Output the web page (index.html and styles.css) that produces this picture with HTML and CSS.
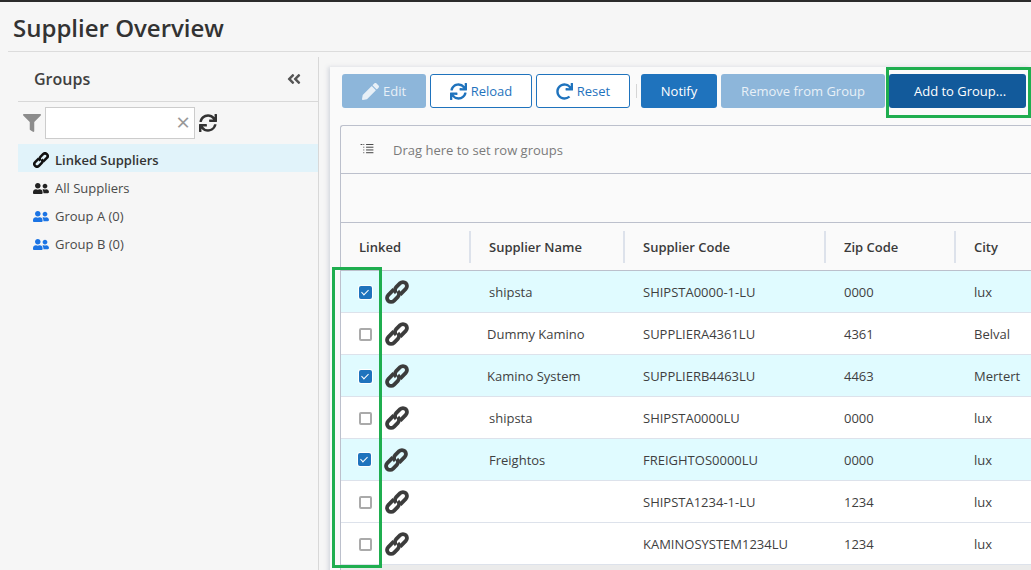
FILE: index.html
```html
<!DOCTYPE html>
<html lang="en">
<head>
    <meta charset="UTF-8">
    <meta name="viewport" content="width=device-width, initial-scale=1.0">
    <title>Supplier Overview</title>
    <link rel="stylesheet" href="styles.css">
</head>
<body>
    <svg class="sprites" aria-hidden="true">
        <symbol id="i-link" viewBox="-15 -15 30 30"><g transform="rotate(-45)" fill="none" stroke="currentColor" stroke-width="4.8"><path d="M-.5-5H-10.5A5 5 0 0 0-10.5 5H-3.5A5 5 0 0 0 1.5 0"/><path d="M.5 5H10.5A5 5 0 0 0 10.5-5H3.5A5 5 0 0 0-1.5 0"/></g></symbol>
        <symbol id="i-sync" viewBox="0 0 512 512"><path d="M440.65 12.57l4 82.77A247.16 247.16 0 0 0 255.83 8C134.73 8 33.91 94.92 12.29 209.82A12 12 0 0 0 24.09 224h49.05a12 12 0 0 0 11.67-9.26 175.91 175.91 0 0 1 317-56.94l-101.46-4.86a12 12 0 0 0-12.57 12v47.41a12 12 0 0 0 12 12H500a12 12 0 0 0 12-12V12a12 12 0 0 0-12-12h-47.37a12 12 0 0 0-11.98 12.57zM255.83 432a175.61 175.61 0 0 1-146-77.8l101.8 4.87a12 12 0 0 0 12.57-12v-47.4a12 12 0 0 0-12-12H12a12 12 0 0 0-12 12V500a12 12 0 0 0 12 12h47.35a12 12 0 0 0 12-12.6l-4.15-82.57A247.17 247.17 0 0 0 255.83 504c121.11 0 221.93-86.92 243.55-201.82a12 12 0 0 0-11.8-14.18h-49.05a12 12 0 0 0-11.67 9.26A175.86 175.86 0 0 1 255.83 432z"/></symbol>
        <symbol id="i-redo" viewBox="0 0 512 512"><path d="M500.33 0h-47.41a12 12 0 0 0-12 12.57l4 82.76A247.42 247.42 0 0 0 256 8C119.34 8 7.9 119.53 8 256.19 8.1 393.07 119.1 504 256 504a247.1 247.1 0 0 0 166.18-63.91 12 12 0 0 0 .48-17.43l-34-34a12 12 0 0 0-16.38-.55A176 176 0 1 1 402.1 157.8l-101.53-4.87a12 12 0 0 0-12.57 12v47.41a12 12 0 0 0 12 12h200.33a12 12 0 0 0 12-12V12a12 12 0 0 0-12-12z"/></symbol>
        <symbol id="i-pencil" viewBox="0 0 512 512"><path d="M497.9 142.1l-46.1 46.1c-4.7 4.7-12.3 4.7-17 0l-111-111c-4.7-4.7-4.7-12.3 0-17l46.1-46.1c18.7-18.7 49.1-18.7 67.9 0l60.1 60.1c18.8 18.7 18.8 49.1 0 67.9zM284.2 99.8L21.6 362.4.4 483.9c-2.9 16.4 11.4 30.6 27.8 27.8l121.5-21.3 262.6-262.6c4.7-4.7 4.7-12.3 0-17l-111-111c-4.8-4.7-12.4-4.7-17.1 0z"/></symbol>
        <symbol id="i-filter" viewBox="0 0 512 512"><path d="M487.976 0H24.028C2.71 0-8.047 25.866 7.058 40.971L192 225.941V432c0 7.831 3.821 15.17 10.237 19.662l80 55.98C298.02 518.69 320 507.493 320 487.98V225.941l184.947-184.97C520.021 25.896 509.338 0 487.976 0z"/></symbol>
        <symbol id="i-users" viewBox="0 0 640 512"><path d="M192 256c61.9 0 112-50.1 112-112S253.9 32 192 32 80 82.1 80 144s50.1 112 112 112zm76.8 32h-8.3c-20.8 10-43.9 16-68.5 16s-47.6-6-68.5-16h-8.3C51.6 288 0 339.6 0 403.2V432c0 26.5 21.5 48 48 48h288c26.5 0 48-21.5 48-48v-28.8c0-63.6-51.6-115.2-115.2-115.2zM480 256c53 0 96-43 96-96s-43-96-96-96-96 43-96 96 43 96 96 96zm48 32h-3.8c-13.9 4.8-28.6 8-44.2 8s-30.3-3.2-44.2-8H432c-20.4 0-39.2 5.9-55.7 15.4 24.4 26.3 39.7 61.2 39.7 99.8v38.4c0 2.2-.5 4.3-.6 6.4H592c26.5 0 48-21.5 48-48 0-61.9-50.1-112-112-112z"/></symbol>
        <symbol id="i-collapse" viewBox="0 0 448 512"><path d="M223.7 239l136-136c9.4-9.4 24.6-9.4 33.9 0l22.6 22.6c9.4 9.4 9.4 24.6 0 33.9L319.9 256l96.4 96.4c9.4 9.4 9.4 24.6 0 33.9L393.7 409c-9.4 9.4-24.6 9.4-33.9 0l-136-136c-9.5-9.4-9.5-24.6-.1-34zm-192 34l136 136c9.4 9.4 24.6 9.4 33.9 0l22.6-22.6c9.4-9.4 9.4-24.6 0-33.9L127.9 256l96.4-96.4c9.4-9.4 9.4-24.6 0-33.9L201.7 103c-9.4-9.4-24.6-9.4-33.9 0l-136 136c-9.5 9.4-9.5 24.6-.1 34z"/></symbol>
    </svg>

    <div class="topbar"></div>
    <h1 class="page-title">Supplier Overview</h1>

    <div class="layout">
        <aside class="sidebar">
            <div class="sidebar-head">
                <span class="sidebar-title">Groups</span>
                <svg class="icon-collapse"><use href="#i-collapse"/></svg>
            </div>
            <div class="filter-row">
                <svg class="icon-filter"><use href="#i-filter"/></svg>
                <div class="filter-box"><span class="filter-clear">×</span></div>
                <svg class="icon-refresh"><use href="#i-sync"/></svg>
            </div>
            <ul class="group-list">
                <li class="group-item selected"><svg class="icon-chain"><use href="#i-link"/></svg>Linked Suppliers</li>
                <li class="group-item"><svg class="icon-people"><use href="#i-users"/></svg>All Suppliers</li>
                <li class="group-item"><svg class="icon-people blue"><use href="#i-users"/></svg>Group A (0)</li>
                <li class="group-item"><svg class="icon-people blue"><use href="#i-users"/></svg>Group B (0)</li>
            </ul>
        </aside>

        <main class="panel">
            <div class="toolbar">
                <button class="btn btn-solid off btn-edit"><svg><use href="#i-pencil"/></svg>Edit</button>
                <button class="btn btn-line btn-reload"><svg><use href="#i-sync"/></svg>Reload</button>
                <button class="btn btn-line btn-reset"><svg><use href="#i-redo"/></svg>Reset</button>
                <span class="toolbar-sep"></span>
                <button class="btn btn-solid btn-notify">Notify</button>
                <button class="btn btn-solid off btn-remove">Remove from Group</button>
                <button class="btn btn-solid btn-add">Add to Group...</button>
            </div>

            <div class="grid">
                <div class="grid-groups">
                    <svg class="icon-rowgroup" viewBox="0 0 14 12"><path d="M0 .5h2M3 .5h1M3 3.5h1M3 6.5h1M3 9.5h1M6 .5h8M6 3.5h8M6 6.5h8M6 9.5h8"/></svg>
                    <span>Drag here to set row groups</span>
                </div>
                <div class="grid-filter"></div>
                <div class="row head">
                    <div class="cell">Linked</div>
                    <div class="cell">Supplier Name</div>
                    <div class="cell">Supplier Code</div>
                    <div class="cell">Zip Code</div>
                    <div class="cell">City</div>
                </div>
                <div class="row on">
                    <div class="cell cell-link"><span class="check on"></span><svg class="icon-link"><use href="#i-link"/></svg></div>
                    <div class="cell">shipsta</div>
                    <div class="cell">SHIPSTA0000-1-LU</div>
                    <div class="cell">0000</div>
                    <div class="cell">lux</div>
                </div>
                <div class="row">
                    <div class="cell cell-link"><span class="check"></span><svg class="icon-link"><use href="#i-link"/></svg></div>
                    <div class="cell shift">Dummy Kamino</div>
                    <div class="cell">SUPPLIERA4361LU</div>
                    <div class="cell">4361</div>
                    <div class="cell">Belval</div>
                </div>
                <div class="row on">
                    <div class="cell cell-link"><span class="check on"></span><svg class="icon-link"><use href="#i-link"/></svg></div>
                    <div class="cell shift">Kamino System</div>
                    <div class="cell">SUPPLIERB4463LU</div>
                    <div class="cell">4463</div>
                    <div class="cell">Mertert</div>
                </div>
                <div class="row">
                    <div class="cell cell-link"><span class="check"></span><svg class="icon-link"><use href="#i-link"/></svg></div>
                    <div class="cell">shipsta</div>
                    <div class="cell">SHIPSTA0000LU</div>
                    <div class="cell">0000</div>
                    <div class="cell">lux</div>
                </div>
                <div class="row on">
                    <div class="cell cell-link shift"><span class="check on"></span><svg class="icon-link"><use href="#i-link"/></svg></div>
                    <div class="cell">Freightos</div>
                    <div class="cell">FREIGHTOS0000LU</div>
                    <div class="cell">0000</div>
                    <div class="cell">lux</div>
                </div>
                <div class="row">
                    <div class="cell cell-link"><span class="check"></span><svg class="icon-link"><use href="#i-link"/></svg></div>
                    <div class="cell"></div>
                    <div class="cell">SHIPSTA1234-1-LU</div>
                    <div class="cell">1234</div>
                    <div class="cell">lux</div>
                </div>
                <div class="row">
                    <div class="cell cell-link"><span class="check"></span><svg class="icon-link"><use href="#i-link"/></svg></div>
                    <div class="cell"></div>
                    <div class="cell">KAMINOSYSTEM1234LU</div>
                    <div class="cell">1234</div>
                    <div class="cell">lux</div>
                </div>
                <div class="grid-foot"></div>
            </div>
        </main>
    </div>

    <!-- green annotation boxes drawn over the screenshot -->
    <div class="mark mark-add"></div>
    <div class="mark mark-check"></div>
</body>
</html>
```

FILE: styles.css
```css
html, body {
    height: 100%;
}
body {
    margin: 0;
    overflow: hidden;
    position: relative;
    background-color: #f6f6f6;
    font-family: "Open Sans", Arial, sans-serif;
    font-size: 13px;
    color: #3f3f3f;
}
.sprites {
    display: none;
}
.topbar {
    height: 2px;
    background-color: #2c2c2c;
}
.page-title {
    margin: 0 0 0 8px;
    padding: 9px 0 6px 5px;
    height: 34px;
    line-height: 34px;
    font-size: 24px;
    font-weight: 600;
    color: #333;
    border-bottom: 1px solid #dcdcdc;
}
.layout {
    display: flex;
    padding-left: 18px;
}

/* left column */
.sidebar {
    width: 300px;
    height: 520px;
    margin-top: 5px;
    border-right: 1px solid #d8d8d8;
    flex-shrink: 0;
}
.sidebar-head {
    display: flex;
    justify-content: space-between;
    align-items: center;
    height: 44px;
    padding: 0 17px 0 16px;
    border-bottom: 1px solid #d8d8d8;
}
.sidebar-title {
    font-size: 16px;
    font-weight: 600;
    color: #404040;
}
.icon-collapse {
    width: 14px;
    height: 16px;
    fill: #555;
}
.filter-row {
    display: flex;
    align-items: center;
    height: 42px;
    padding-left: 5px;
}
.icon-filter {
    width: 18px;
    height: 18px;
    fill: #8c8c8c;
}
.filter-box {
    box-sizing: border-box;
    width: 150px;
    height: 32px;
    margin-left: 4px;
    border: 1px solid #ccc;
    background: #fff;
    position: relative;
}
.filter-clear {
    position: absolute;
    right: 4px;
    top: 3px;
    font-size: 24px;
    line-height: 22px;
    color: #999;
}
.icon-refresh {
    width: 18px;
    height: 18px;
    margin-left: 4px;
    fill: #333;
}
.group-list {
    list-style: none;
    margin: 0;
    padding: 0;
}
.group-item {
    box-sizing: border-box;
    display: flex;
    align-items: center;
    height: 28px;
    padding: 4px 0 0 15px;
    color: #4a4a4a;
}
.group-item.selected {
    background-color: #e1f3fa;
    color: #333;
    font-weight: 600;
}
.icon-chain {
    width: 16px;
    height: 16px;
    margin-right: 6px;
    color: #111;
}
.icon-people {
    width: 16px;
    height: 13px;
    margin-right: 6px;
    fill: #222;
}
.icon-people.blue {
    fill: #1b74e4;
}

/* right panel */
.panel {
    flex: 1;
    margin: 15px 0 0 11px;
    background-color: #fafafa;
    box-shadow: -2px 0 4px rgba(120, 130, 160, 0.25);
    height: 520px;
    padding: 7px 0 0 12px;
    min-width: 0;
}
.toolbar {
    display: flex;
    gap: 4px;
    height: 34px;
}
.btn {
    box-sizing: border-box;
    height: 34px;
    padding: 0;
    display: flex;
    align-items: center;
    justify-content: center;
    border-radius: 3px;
    font-family: inherit;
    font-size: 13px;
}
.btn svg {
    width: 17px;
    height: 17px;
    margin-right: 4px;
    fill: currentColor;
}
.btn-solid {
    border: none;
    background-color: #1f73bd;
    color: #fff;
}
.btn-solid.off {
    background-color: #8db6da;
    color: #e8f0f7;
}
.btn-line {
    border: 1px solid #1f73bd;
    background-color: #fff;
    color: #1f73bd;
}
.btn-edit { width: 84px; }
.btn-reload { width: 102px; }
.btn-reset { width: 94px; }
.btn-notify { width: 76px; }
.btn-remove { width: 164px; }
.btn-add {
    width: 137px;
    padding-left: 5px;
    background-color: #125a9b;
}
.toolbar-sep {
    width: 1px;
    height: 14px;
    margin: 10px 0 0 2px;
    background-color: #d5d5d5;
}

.grid {
    margin: 17px 0 0 -2px;
    border-left: 1px solid #bcc0cc;
    border-top: 1px solid #bcc0cc;
    border-top-left-radius: 3px;
}
.grid-groups {
    display: flex;
    align-items: center;
    height: 47px;
    padding-left: 19px;
    border-bottom: 1px solid #bcc0cc;
    color: #7a7a7a;
}
.icon-rowgroup {
    width: 14px;
    height: 11px;
    margin-right: 19px;
    fill: none;
    stroke: #333;
    stroke-width: 1;
}
.grid-filter {
    height: 48px;
    border-bottom: 1px solid #bcc0cc;
}
.row {
    display: grid;
    grid-template-columns: 130px 154px 201px 130px 1fr;
    height: 41px;
    background-color: #fff;
    border-bottom: 1px solid #dde2eb;
    align-items: center;
}
.row.on {
    background-color: #e0fbff;
}
.row.head {
    height: 47px;
    background-color: #fafafa;
    border-bottom-color: #bcc0cc;
    font-weight: 600;
    color: #3a3a3a;
}
.cell {
    padding-left: 18px;
    white-space: nowrap;
}
.cell.shift {
    padding-left: 16px;
}
.row.head .cell {
    height: 32px;
    line-height: 32px;
    margin-left: -2px;
    padding-left: 18px;
    border-left: 2px solid #dde2eb;
}
.row.head .cell:first-child {
    margin-left: 0;
    border-left: none;
}
.cell-link {
    display: flex;
    align-items: center;
}
.cell-link.shift {
    padding-left: 17px;
}
.check {
    box-sizing: border-box;
    width: 13px;
    height: 13px;
    margin-top: 2px;
    border: 2px solid #aaa;
    border-radius: 2px;
    background-color: #fff;
    position: relative;
    flex-shrink: 0;
}
.cell-link.shift .check {
    margin-top: 0;
}
.check.on {
    border-color: #1f73bd;
    background-color: #1f73bd;
    box-shadow: 0 0 0 1px #fff;
}
.check.on::after {
    content: "";
    position: absolute;
    left: 2px;
    top: 0;
    width: 3px;
    height: 6px;
    border: solid #fff;
    border-width: 0 1.5px 1.5px 0;
    transform: rotate(45deg);
}
.icon-link {
    width: 24px;
    height: 24px;
    margin-left: 13px;
    color: #3c3c3c;
}
.grid-foot {
    height: 10px;
    background-color: #ebebeb;
}

/* annotation */
.mark {
    position: absolute;
    box-sizing: border-box;
    border: 3px solid #1fae4f;
}
.mark-add {
    left: 886px;
    top: 67px;
    width: 145px;
    height: 51px;
}
.mark-check {
    left: 332px;
    top: 267px;
    width: 50px;
    height: 301px;
}
```
